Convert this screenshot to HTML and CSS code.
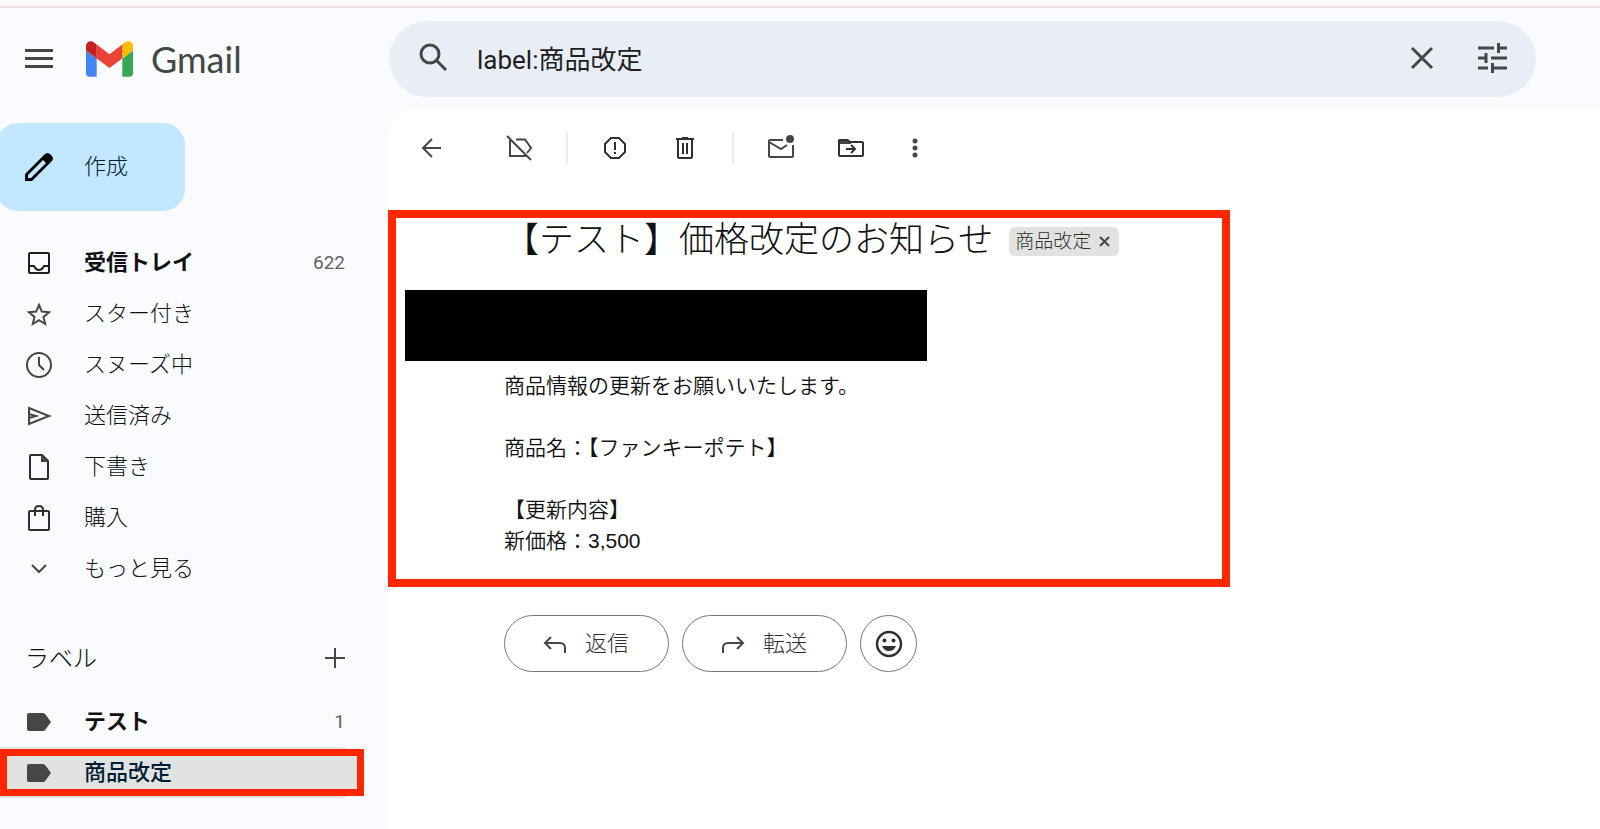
FILE: index.html
```html
<!DOCTYPE html>
<html lang="ja">
<head>
    <meta charset="UTF-8">
    <meta name="viewport" content="width=device-width, initial-scale=1.0">
    <title>Gmail</title>
    <link rel="stylesheet" href="styles.css">
</head>
<body>
    <div class="top-strip"></div>
    <header class="header">
        <div class="brand">
            <button type="button" class="icon-btn" aria-label="メインメニュー">
                <svg width="30" height="30" viewBox="0 0 30 30" fill="#444746"><path d="M1 5h28v3H1zM1 13h28v3H1zM1 21h28v3H1z"/></svg>
            </button>
            <a href="#" class="logo">
                <svg width="47" height="36" viewBox="52 42 88 66">
                    <path fill="#4285f4" d="M58 108h14V74L52 59v43c0 3.32 2.69 6 6 6"/>
                    <path fill="#34a853" d="M120 108h14c3.32 0 6-2.69 6-6V59l-20 15"/>
                    <path fill="#fbbc04" d="M120 48v26l20-15v-8c0-7.42-8.47-11.65-14.4-7.2"/>
                    <path fill="#ea4335" d="M72 74V48l24 18 24-18v26L96 92"/>
                    <path fill="#c5221f" d="M52 51v8l20 15V48l-5.6-4.2c-5.94-4.45-14.4-.22-14.4 7.2"/>
                </svg>
                <span>Gmail</span>
            </a>
        </div>
        <form class="search">
            <button type="submit" class="icon-btn" aria-label="検索">
                <svg width="30" height="30" viewBox="0 0 30 30" fill="none" stroke="#444746" stroke-width="3"><circle cx="11" cy="11" r="9"/><path d="M17 17l10 10"/></svg>
            </button>
            <input type="text" value="label:商品改定" aria-label="メールを検索">
            <button type="button" class="icon-btn" aria-label="検索をクリア">
                <svg width="30" height="30" viewBox="0 0 30 30" fill="none" stroke="#444746" stroke-width="3"><path d="M5 5l20 20M25 5L5 25"/></svg>
            </button>
            <button type="button" class="icon-btn" aria-label="検索オプションを表示">
                <svg width="30" height="30" viewBox="0 0 30 30" fill="none" stroke="#444746" stroke-width="3"><path d="M1 5h16M21.500 0v10M21 5h9M1 15h9M9 10v10M14 15h16M1 25h10M15.500 20v10M15 25h15"/></svg>
            </button>
        </form>
    </header>
    <div class="layout">
        <aside class="sidebar">
            <button type="button" class="compose">
                <svg width="30" height="30" viewBox="0 0 30 30"><path fill="#000" fill-rule="evenodd" d="M1 29v-7L20.500 2.500q3-3 6 0l1 1q3 3 0 6L8 29zM4 26h3L22 11l-3-3L4 23z"/><path fill="#000" d="M19 5l6 6 3-3-5-6z"/></svg>
                <span class="text">作成</span>
            </button>
            <nav>
                <a href="#" class="nav-item unread">
                    <svg width="30" height="30" viewBox="0 0 30 30" fill="none" stroke="#1f1f1f" stroke-width="2"><rect x="5" y="5" width="20" height="20" rx="1"/><path d="M5 18h5q2 4 5 4t5-4h5"/></svg>
                    <span class="text">受信トレイ</span>
                    <span class="count">622</span>
                </a>
                <a href="#" class="nav-item">
                    <svg width="30" height="30" viewBox="0 0 30 30" fill="none" stroke="#444746" stroke-width="2"><path d="M15 6l2.800 6.600 7.200.6-5.500 4.700 1.700 7.100-6.200-3.800L8.800 25l1.700-7.100L5 13.200l7.200-.6z"/></svg>
                    <span class="text">スター付き</span>
                </a>
                <a href="#" class="nav-item">
                    <svg width="30" height="30" viewBox="0 0 30 30" fill="none" stroke="#444746" stroke-width="2"><circle cx="15" cy="15" r="12"/><path d="M15 7v8l5 5"/></svg>
                    <span class="text">スヌーズ中</span>
                </a>
                <a href="#" class="nav-item">
                    <svg width="30" height="30" viewBox="0 0 30 30" fill="none" stroke="#444746" stroke-width="2"><path d="M5 7l20 8-20 8zM5 13l7 2-7 2"/></svg>
                    <span class="text">送信済み</span>
                </a>
                <a href="#" class="nav-item">
                    <svg width="30" height="30" viewBox="0 0 30 30" fill="none" stroke="#303030" stroke-width="2"><path d="M8 3h10l6 6v17q0 1-1 1H7q-1 0-1-1V4q0-1 1-1z"/><path fill="#444746" stroke="none" d="M17 3v7h7z"/></svg>
                    <span class="text">下書き</span>
                </a>
                <a href="#" class="nav-item">
                    <svg width="30" height="30" viewBox="0 0 30 30" fill="none" stroke="#303030" stroke-width="2"><rect x="5" y="8" width="20" height="19" rx="1"/><path d="M11 13V7q0-4 4-4t4 4v6"/></svg>
                    <span class="text">購入</span>
                </a>
                <a href="#" class="nav-item">
                    <svg width="30" height="30" viewBox="0 0 30 30" fill="none" stroke="#444746" stroke-width="2"><path d="M8 11l7 7 7-7"/></svg>
                    <span class="text">もっと見る</span>
                </a>
            </nav>
            <div class="labels-head">
                <h2>ラベル</h2>
                <button type="button" class="icon-btn" aria-label="新しいラベルを作成">
                    <svg width="20" height="20" viewBox="0 0 20 20" fill="none" stroke="#444746" stroke-width="2"><path d="M10 0v20M0 10h20"/></svg>
                </button>
            </div>
            <nav>
                <a href="#" class="nav-item unread">
                    <svg width="30" height="30" viewBox="0 0 30 30" fill="#444746"><path d="M5 6h14q1.500 0 2.500 1.500L27 15l-5.500 7.500Q20.500 24 19 24H5q-2 0-2-2V8q0-2 2-2z"/></svg>
                    <span class="text">テスト</span>
                    <span class="count">1</span>
                </a>
                <a href="#" class="nav-item selected">
                    <svg width="30" height="30" viewBox="0 0 30 30" fill="#444746"><path d="M5 6h14q1.500 0 2.500 1.500L27 15l-5.500 7.500Q20.500 24 19 24H5q-2 0-2-2V8q0-2 2-2z"/></svg>
                    <span class="text">商品改定</span>
                </a>
            </nav>
        </aside>
        <main class="panel">
            <div class="toolbar">
                <button type="button" class="icon-btn back" aria-label="戻る">
                    <svg width="36" height="36" viewBox="0 0 36 36" fill="none" stroke="#444746" stroke-width="2"><path d="M28 18H10M19 9l-9 9 9 9"/></svg>
                </button>
                <button type="button" class="icon-btn" aria-label="ラベルを削除">
                    <svg width="36" height="36" viewBox="0 0 36 36" fill="none" stroke="#444746" stroke-width="2"><path d="M6 6l24 24M9 10v16h17M15 9.500h9l6 8.500-4 5"/></svg>
                </button>
                <span class="divider"></span>
                <div class="tool-group">
                    <button type="button" class="icon-btn" aria-label="迷惑メールを報告">
                        <svg width="36" height="36" viewBox="0 0 36 36" fill="none" stroke="#303030" stroke-width="2"><path d="M14 8h8l6 6v8l-6 6h-8l-6-6v-8zM18 12v8M18 22v2"/></svg>
                    </button>
                    <button type="button" class="icon-btn" aria-label="削除">
                        <svg width="36" height="36" viewBox="0 0 36 36" fill="none" stroke="#303030" stroke-width="2"><path d="M9 9h18M15 8h6M11 9v18q0 1 1 1h12q1 0 1-1V9M16 13v11M20 13v11"/></svg>
                    </button>
                </div>
                <span class="divider"></span>
                <div class="tool-group">
                    <button type="button" class="icon-btn" aria-label="未読にする">
                        <svg width="36" height="36" viewBox="0 0 36 36" fill="none" stroke="#444746" stroke-width="2"><path d="M20 10H7q-1 0-1 1v15q0 1 1 1h22q1 0 1-1V15M6 12l12 7 6-4"/><circle cx="27" cy="9" r="4" fill="#444746" stroke="none"/></svg>
                    </button>
                    <button type="button" class="icon-btn" aria-label="移動">
                        <svg width="36" height="36" viewBox="0 0 36 36" fill="none" stroke="#303030" stroke-width="2"><path fill="#444746" stroke="none" d="M6 9h9l3 3v2H6z"/><path d="M6 10v15q0 1 1 1h22q1 0 1-1V13q0-1-1-1H17l-3-2H7q-1 0-1 1M13 19h8M18 15l4 4-4 4"/></svg>
                    </button>
                    <button type="button" class="icon-btn more" aria-label="その他">
                        <svg width="24" height="36" viewBox="0 0 24 36" fill="#444746"><circle cx="12" cy="11" r="2.500"/><circle cx="12" cy="18" r="2.500"/><circle cx="12" cy="25" r="2.500"/></svg>
                    </button>
                </div>
            </div>
            <article class="message">
                <div class="subject">
                    <h1>【テスト】価格改定のお知らせ</h1>
                    <span class="chip">
                        商品改定
                        <button type="button" class="icon-btn" aria-label="ラベルを外す">
                            <svg width="12" height="12" viewBox="0 0 12 12" fill="none" stroke="#444746" stroke-width="2"><path d="M1 2l9 9M10 2l-9 9"/></svg>
                        </button>
                    </span>
                </div>
                <div class="redacted"></div>
                <p class="message-body">
                    商品情報の更新をお願いいたします。<br>
                    <br>
                    商品名：【ファンキーポテト】<br>
                    <br>
                    【更新内容】<br>
                    新価格：3,500
                </p>
            </article>
            <div class="actions">
                <button type="button" class="pill">
                    <svg width="24" height="24" viewBox="0 0 24 24" fill="none" stroke="#444746" stroke-width="2"><path d="M8 5l-6 6 6 6M2 11h15q5 0 5 5v5"/></svg>
                    <span class="text">返信</span>
                </button>
                <button type="button" class="pill">
                    <svg width="24" height="24" viewBox="0 0 24 24" fill="none" stroke="#444746" stroke-width="2"><path d="M16 5l6 6-6 6M22 11H7q-5 0-5 5v5"/></svg>
                    <span class="text">転送</span>
                </button>
                <button type="button" class="pill emoji" aria-label="絵文字でリアクション">
                    <svg width="28" height="28" viewBox="0 0 28 28"><circle cx="14" cy="14" r="12" fill="none" stroke="#303030" stroke-width="2.500"/><circle cx="9.500" cy="10.500" r="2" fill="#303030"/><circle cx="18.500" cy="10.500" r="2" fill="#303030"/><path fill="#303030" d="M7 16h14q-2 5-7 5t-7-5z"/></svg>
                </button>
            </div>
        </main>
    </div>
</body>
</html>
```
FILE: styles.css
```css
* {
    box-sizing: border-box;
}
body {
    margin: 0;
    min-height: 100vh;
    display: flex;
    flex-direction: column;
    background-color: #f9fbff;
    color: #111;
    font-family: Roboto, "Noto Sans CJK JP", sans-serif;
    font-size: 22px;
    font-weight: 300;
}
button {
    font: inherit;
    color: inherit;
    cursor: pointer;
}
a {
    color: inherit;
    text-decoration: none;
}
svg {
    display: block;
    flex: none;
}
h1, h2, p {
    margin: 0;
}
.icon-btn {
    display: flex;
    padding: 0;
    border: none;
    background: none;
}
.text {
    padding-bottom: 6px;
}
.top-strip {
    height: 8px;
    background-color: #fff8f8;
    border-bottom: 2px solid #f1dde3;
}

/* header */
.header {
    display: flex;
    padding: 13px 64px 13px 0;
}
.brand {
    display: flex;
    align-items: center;
    gap: 32px;
    width: 389px;
    padding-left: 24px;
}
.logo {
    display: flex;
    align-items: center;
    gap: 18px;
    color: #444746;
    font-family: Lato, sans-serif;
    font-size: 36px;
    font-weight: 400;
    line-height: 40px;
}
.search {
    flex: 1;
    display: flex;
    align-items: center;
    gap: 40px;
    height: 76px;
    padding: 0 29px 3px 30px;
    border-radius: 38px;
    background-color: #e9eef6;
}
.search input {
    flex: 1;
    min-width: 0;
    margin-left: -12px;
    padding: 0;
    border: none;
    outline: none;
    background: none;
    color: #1f1f1f;
    font-family: inherit;
    font-size: 26px;
    font-weight: 400;
}

/* sidebar */
.layout {
    flex: 1;
    display: flex;
}
.sidebar {
    width: 389px;
    padding-top: 13px;
}
.compose {
    display: flex;
    align-items: center;
    gap: 30px;
    height: 88px;
    margin: 0 0 26px -4px;
    padding: 0 57px 0 28px;
    border: none;
    border-radius: 22px;
    background-color: #c2e7ff;
    color: #001d35;
}
.nav-item {
    position: relative;
    display: flex;
    align-items: center;
    gap: 30px;
    height: 51px;
    margin-right: 25px;
    padding: 0 19px 0 24px;
}
.unread {
    font-weight: 700;
}
.count {
    margin-left: auto;
    color: #5f6368;
    font-size: 19px;
    font-weight: 400;
}
.labels-head {
    display: flex;
    align-items: center;
    justify-content: space-between;
    height: 51px;
    margin: 38px 44px 13px 0;
    padding-left: 25px;
}
.labels-head h2 {
    padding-bottom: 2px;
    font-size: 24px;
    font-weight: 300;
}
.selected {
    background-color: #e1e3e1;
    border-radius: 0 25px 25px 0;
    color: #001d35;
    font-weight: 500;
}
.selected::after {
    content: "";
    position: absolute;
    inset: 2px 0;
    border: 7px solid #ff2600;
}

/* message panel */
.panel {
    flex: 1;
    min-width: 0;
    border-radius: 24px 0 0 0;
    background-color: #fff;
}
.toolbar {
    display: flex;
    align-items: center;
    gap: 29px;
    height: 76px;
    padding-left: 24px;
}
.back {
    margin-right: 23px;
}
.divider {
    width: 2px;
    height: 32px;
    background-color: #ececec;
}
.tool-group {
    display: flex;
    gap: 34px;
}
.message {
    max-width: 842px;
    margin: 24px 0 28px -1px;
    padding: 2px 0 23px;
    border: 8px solid #ff2600;
}
.subject {
    display: flex;
    align-items: center;
    gap: 16px;
    padding-left: 108px;
}
.subject h1 {
    font-size: 35px;
    font-weight: 300;
    line-height: 42px;
}
.chip {
    display: flex;
    align-items: center;
    gap: 8px;
    height: 29px;
    padding: 0 8px 0 6px;
    border-radius: 6px;
    background-color: #e1e3e1;
    color: #303030;
    font-size: 19px;
    line-height: 29px;
}
.redacted {
    width: 522px;
    max-width: 100%;
    height: 71px;
    margin: 28px 0 9px 9px;
    background-color: #000;
}
.message-body {
    padding-left: 108px;
    font-family: "Liberation Sans", "Noto Sans CJK JP", sans-serif;
    font-size: 21px;
    font-weight: 350;
    line-height: 31px;
    color: #111;
}
.actions {
    display: flex;
    gap: 13px;
    padding-left: 115px;
}
.pill {
    display: flex;
    align-items: center;
    justify-content: center;
    gap: 18px;
    height: 57px;
    padding: 0 39px 0 38px;
    border: 1px solid #747775;
    border-radius: 29px;
    background: none;
    color: #303030;
}
.emoji {
    width: 57px;
    padding: 0;
}
```
